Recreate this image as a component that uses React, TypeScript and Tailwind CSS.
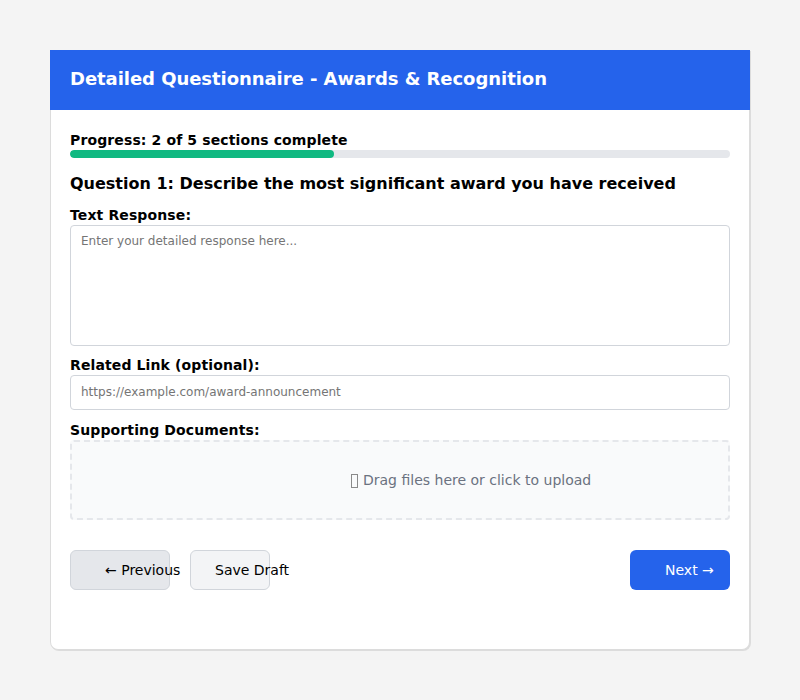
import React from "react";

export default function App() {
  return (
    <div
      className="w-[800px] h-[700px] bg-[#f4f4f4] pt-[50px]"
      style={{ fontFamily: '"DejaVu Sans", sans-serif' }}
    >
      <div className="ml-[50px] w-[700px] h-[600px] bg-white rounded-b-lg border-x border-b border-[#dcdcdc] shadow-[1px_1px_0_#dcdcdc] flex flex-col">
        <div className="h-[60px] -mx-px bg-[#2563eb] flex items-center px-[20px] pb-[2px]">
          <h1 className="text-white text-[18px] font-bold leading-[22px] tracking-[-0.05px]">
            Detailed Questionnaire - Awards &amp; Recognition
          </h1>
        </div>
        <div className="px-[19px] pt-[20px] flex flex-col">
          <div className="text-[14px] font-bold leading-[20px] text-black tracking-[0.12px]">
            Progress: 2 of 5 sections complete
          </div>
          <div className="h-[8px] w-full rounded-full bg-[#e5e7eb] overflow-hidden">
            <div className="h-full w-[40%] rounded-full bg-[#10b981]" />
          </div>
          <h2 className="mt-[16px] text-[16px] font-bold leading-[20px] text-black">
            Question 1: Describe the most significant award you have received
          </h2>
          <label className="mt-[11px] text-[14px] font-bold leading-[20px] text-black tracking-[0.12px]">
            Text Response:
          </label>
          <textarea
            className="h-[121px] w-full rounded border border-[#d1d5db] px-[10px] pt-[7px] text-[12px] leading-[16px] resize-none placeholder:text-[#757575] outline-none"
            placeholder="Enter your detailed response here..."
            style={{ fontFamily: '"DejaVu Sans", sans-serif' }}
          />
          <label className="mt-[9px] text-[14px] font-bold leading-[20px] text-black tracking-[0.12px]">
            Related Link (optional):
          </label>
          <input
            className="h-[35px] w-full rounded border border-[#d1d5db] px-[10px] pb-[2px] text-[12px] placeholder:text-[#757575] outline-none"
            placeholder="https://example.com/award-announcement"
            style={{ fontFamily: '"DejaVu Sans", sans-serif' }}
          />
          <label className="mt-[10px] text-[14px] font-bold leading-[20px] text-black tracking-[0.12px]">
            Supporting Documents:
          </label>
          <div className="h-[80px] w-full rounded border-2 border-dashed border-[#e5e7eb] bg-[#f9fafb] flex items-center pl-[279px] text-[14px] text-[#6b7280] whitespace-nowrap">
            <span className="inline-block w-[7px] h-[14px] border border-[#8a8a8a] mr-[5px] mt-[2px]" />
            Drag files here or click to upload
          </div>
          <div className="mt-[30px] flex items-center">
            <button className="h-[40px] w-[100px] rounded-md border border-[#d1d5db] bg-[#e5e7eb] text-left pl-[34px] text-[14px] text-black whitespace-nowrap overflow-visible">
              ← Previous
            </button>
            <button className="ml-[20px] h-[40px] w-[80px] rounded-md border border-[#d1d5db] bg-[#f3f4f6] text-left pl-[24px] text-[14px] text-black whitespace-nowrap overflow-visible">
              Save Draft
            </button>
            <button className="ml-auto h-[40px] w-[100px] rounded-md bg-[#2563eb] text-left pl-[35px] text-[14px] text-white whitespace-nowrap">
              Next →
            </button>
          </div>
        </div>
      </div>
    </div>
  );
}
